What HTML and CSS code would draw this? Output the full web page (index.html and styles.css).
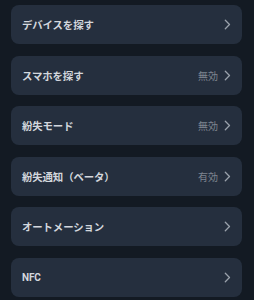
FILE: index.html
```html
<!DOCTYPE html>
<html lang="ja">
<head>
<meta charset="utf-8">
<link rel="stylesheet" href="styles.css">
</head>
<body>
<div class="list">
  <div class="item"><span class="label">デバイスを探す</span><span class="right"><svg class="chev" viewBox="0 0 7 11"><path d="M1.3 1.3l4.2 4.2-4.2 4.2"/></svg></span></div>
  <div class="item"><span class="label">スマホを探す</span><span class="right"><span class="val">無効</span><svg class="chev" viewBox="0 0 7 11"><path d="M1.3 1.3l4.2 4.2-4.2 4.2"/></svg></span></div>
  <div class="item"><span class="label">紛失モード</span><span class="right"><span class="val">無効</span><svg class="chev" viewBox="0 0 7 11"><path d="M1.3 1.3l4.2 4.2-4.2 4.2"/></svg></span></div>
  <div class="item"><span class="label">紛失通知（ベータ）</span><span class="right"><span class="val">有効</span><svg class="chev" viewBox="0 0 7 11"><path d="M1.3 1.3l4.2 4.2-4.2 4.2"/></svg></span></div>
  <div class="item"><span class="label">オートメーション</span><span class="right"><svg class="chev" viewBox="0 0 7 11"><path d="M1.3 1.3l4.2 4.2-4.2 4.2"/></svg></span></div>
  <div class="item"><span class="label nfc">NFC</span><span class="right"><svg class="chev" viewBox="0 0 7 11"><path d="M1.3 1.3l4.2 4.2-4.2 4.2"/></svg></span></div>
</div>
</body>
</html>
```
FILE: styles.css
```css
html, body {
  margin: 0;
  padding: 0;
  background: #131a23;
  height: 100%;
  overflow: hidden;
}
body {
  font-family: "Noto Sans CJK JP", "Noto Sans", sans-serif;
}
.list {
  display: flex;
  flex-direction: column;
  gap: 11.6px;
  padding: 5px 12px 0 11px;
}
.item {
  height: 39px;
  background: #252f3e;
  border-radius: 8px;
  display: flex;
  align-items: center;
  justify-content: space-between;
  padding: 0 11px 0 11px;
}
.label {
  color: #d3d7dd;
  font-size: 10.4px;
  font-weight: 700;
  letter-spacing: -0.1px;
}
.nfc {
  font-family: "Roboto", "Noto Sans", sans-serif;
  font-size: 10px;
}
.right {
  display: flex;
  align-items: center;
  gap: 6px;
}
.val {
  color: #7e8590;
  font-size: 10px;
}
.chev {
  width: 7px;
  height: 11px;
  fill: none;
  stroke: #9aa1ab;
  stroke-width: 1.3;
  stroke-linecap: round;
  stroke-linejoin: round;
}
```
